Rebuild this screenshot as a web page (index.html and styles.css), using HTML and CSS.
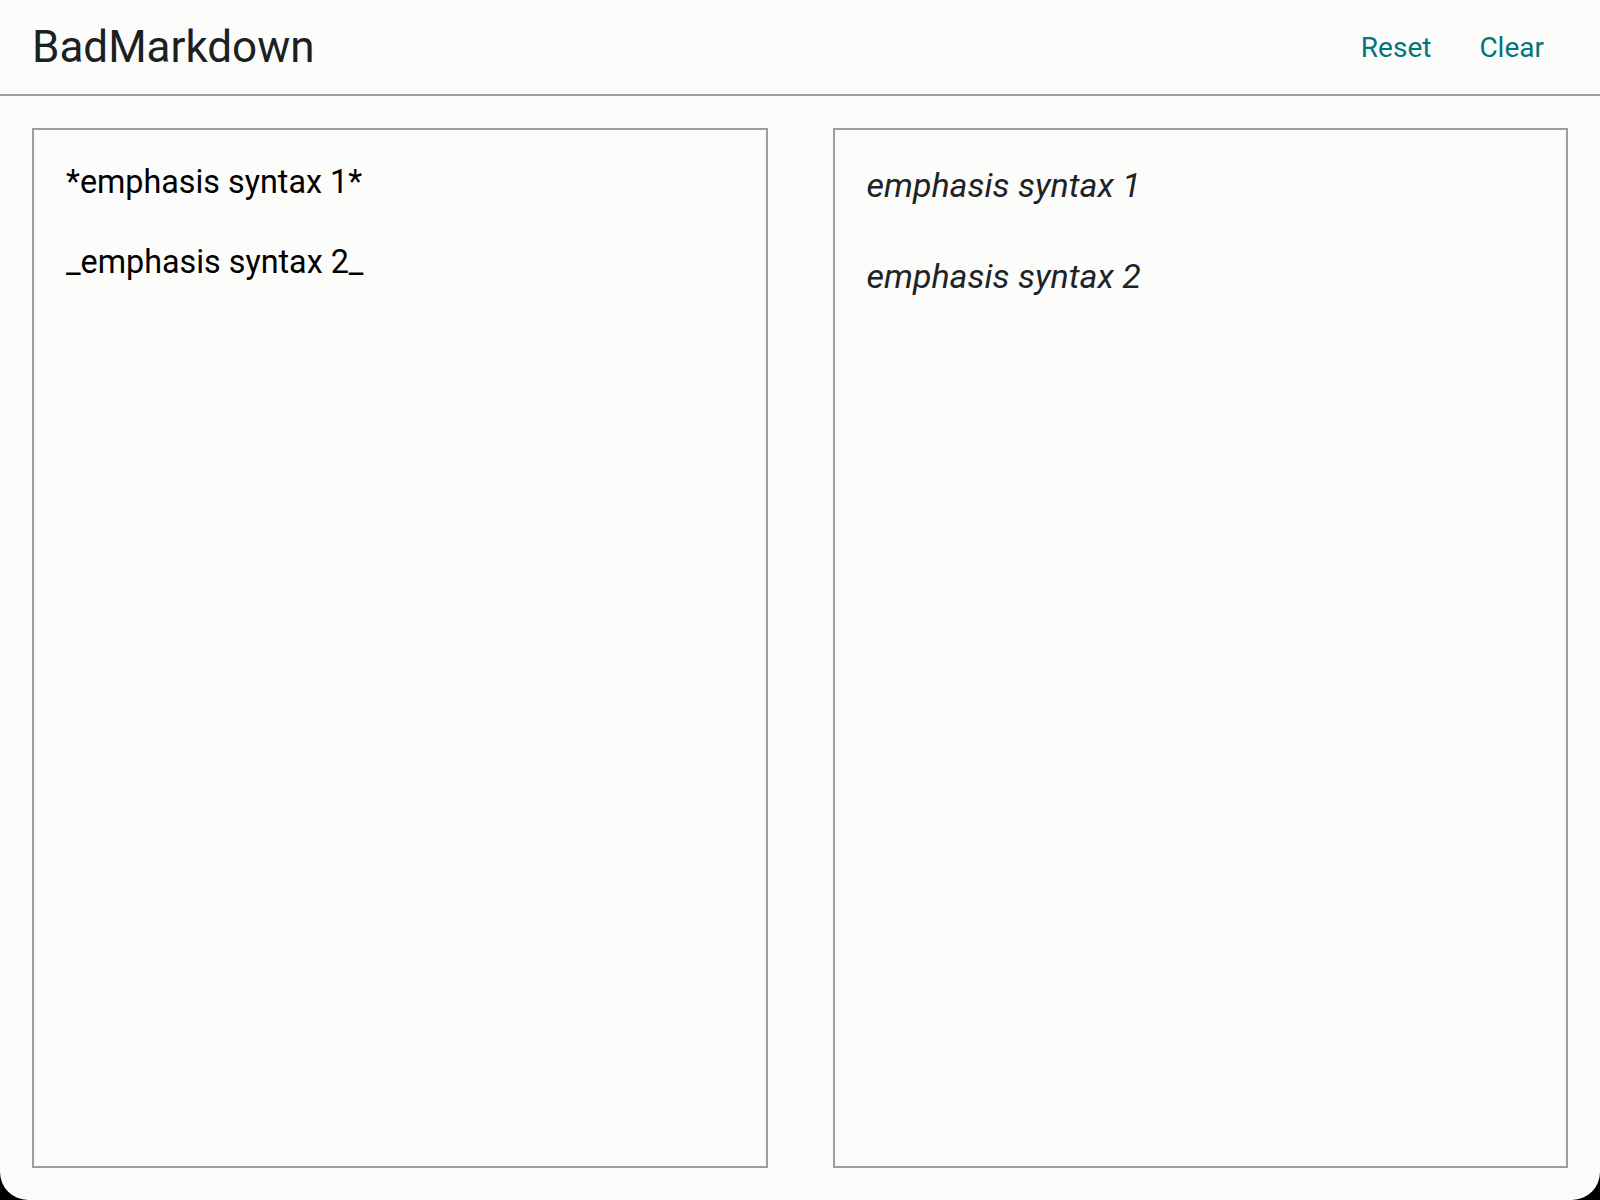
FILE: index.html
```html
<!DOCTYPE html>
<html lang="en">
<head>
<meta charset="utf-8">
<title>BadMarkdown</title>
<link rel="stylesheet" href="styles.css">
</head>
<body>
<div class="app">
  <header class="topbar">
    <h1 class="title">BadMarkdown</h1>
    <nav class="actions">
      <button class="btn" type="button">Reset</button>
      <button class="btn" type="button">Clear</button>
    </nav>
  </header>
  <main class="panes">
    <textarea class="editor" spellcheck="false">*emphasis syntax 1*

_emphasis syntax 2_</textarea>
    <div class="preview">
      <p><em>emphasis syntax 1</em></p>
      <p><em>emphasis syntax 2</em></p>
    </div>
  </main>
</div>
</body>
</html>
```
FILE: styles.css
```css
html {
  background: #000;
  margin: 0;
  padding: 0;
}
body {
  margin: 0;
  padding: 0;
  font-family: Roboto, "Noto Sans", sans-serif;
}
.app {
  width: 1600px;
  height: 1200px;
  background: #fcfcfb;
  border-radius: 0 0 28px 28px;
  display: flex;
  flex-direction: column;
  overflow: hidden;
}
.topbar {
  height: 94px;
  flex: 0 0 auto;
  border-bottom: 2px solid #9e9e9e;
  display: flex;
  align-items: center;
  justify-content: space-between;
  padding: 0 32px;
}
.title {
  margin: 0;
  font-size: 44px;
  font-weight: 400;
  color: #1a2123;
}
.actions {
  display: flex;
  align-items: center;
}
.btn {
  font-family: Roboto, "Noto Sans", sans-serif;
  font-size: 28px;
  font-weight: 400;
  color: #00757c;
  background: transparent;
  border: 0;
  padding: 0 24px;
  margin: 0;
  cursor: pointer;
}
.panes {
  flex: 1 1 auto;
  display: grid;
  grid-template-columns: 1fr 1fr;
  column-gap: 65px;
  padding: 32px 32px 32px;
  min-height: 0;
}
.editor {
  box-sizing: border-box;
  width: 100%;
  height: 100%;
  margin: 0;
  border: 2px solid #9e9e9e;
  border-radius: 0;
  background: transparent;
  padding: 32px 32px;
  font-family: Roboto, "Noto Sans", sans-serif;
  font-size: 32.3px;
  line-height: 40px;
  color: #000;
  resize: none;
  outline: none;
}
.preview {
  box-sizing: border-box;
  border: 2px solid #9e9e9e;
  padding: 31px 32px;
  font-size: 34px;
  line-height: 48px;
  color: #1e2325;
}
.preview p {
  margin: 0 0 43px;
}
```
